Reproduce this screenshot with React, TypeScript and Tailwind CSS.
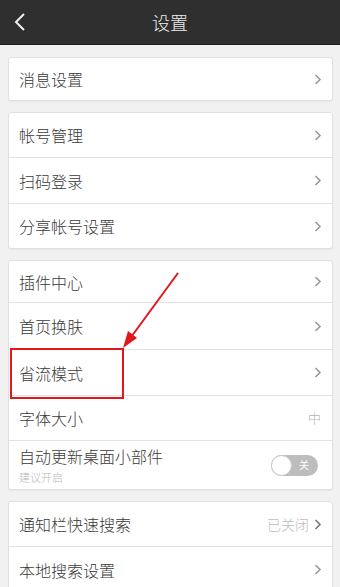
import type { ReactNode } from 'react';

const font = { fontFamily: '"Noto Sans CJK SC", "Noto Sans", sans-serif' };

function Chevron({ dark = false }: { dark?: boolean }) {
  return (
    <svg width="8" height="11" viewBox="0 0 8 11" className="shrink-0">
      <polyline
        points="1.5,1 6,5.5 1.5,10"
        fill="none"
        stroke={dark ? '#777777' : '#9a9a9a'}
        strokeWidth="1.6"
      />
    </svg>
  );
}

function Row({
  label,
  h,
  right,
  sub,
  last = false,
}: {
  label: string;
  h: string;
  right?: ReactNode;
  sub?: string;
  last?: boolean;
}) {
  return (
    <div className={`flex items-center justify-between pl-[10px] pr-[10px] ${h} ${last ? '' : 'border-b border-[#e3e3e3]'}`}>
      <div className="flex flex-col">
        <span className="text-[16px] leading-[20px] font-light text-[#3a3a3a]">{label}</span>
        {sub && <span className="text-[11px] leading-[14px] font-light text-[#b8b8b8] mt-[4px]">{sub}</span>}
      </div>
      {right ?? <Chevron />}
    </div>
  );
}

function Card({ children }: { children: ReactNode }) {
  return (
    <div className="bg-white border border-[#e0e0e0] rounded-[3px] shadow-[0_1px_1px_rgba(0,0,0,0.04)] flex flex-col">
      {children}
    </div>
  );
}

function Toggle() {
  return (
    <div className="relative w-[47px] h-[21px] rounded-full bg-[#bdbdbd] flex items-center mr-[4px]">
      <div className="w-[21px] h-[21px] rounded-full bg-white border border-[#c9c9c9]" />
      <span className="ml-[7px] text-[10px] leading-none text-white">关</span>
    </div>
  );
}

export default function App() {
  return (
    <div className="relative w-[340px] h-[587px] overflow-hidden bg-[#f1f1f1]" style={font}>
      <div className="h-[45px] bg-[#2f2f2f] border-b border-[#1c1c1c] flex items-center relative">
        <svg width="14" height="20" viewBox="0 0 14 20" className="absolute left-[13px] top-[12px]">
          <polyline points="11,2 3,10 11,18" fill="none" stroke="#f0f0f0" strokeWidth="2" />
        </svg>
        <div className="flex-1 text-center text-[18px] font-light text-[#eeeeee]">设置</div>
      </div>

      <div className="flex flex-col gap-[11px] pt-[12px] pl-[8px] pr-[7px]">
        <Card>
          <Row label="消息设置" h="h-[42px]" last />
        </Card>

        <Card>
          <Row label="帐号管理" h="h-[45px]" />
          <Row label="扫码登录" h="h-[46px]" />
          <Row label="分享帐号设置" h="h-[44px]" last />
        </Card>

        <Card>
          <Row label="插件中心" h="h-[42px]" />
          <Row label="首页换肤" h="h-[47px]" />
          <Row label="省流模式" h="h-[46px]" />
          <Row
            label="字体大小"
            h="h-[45px]"
            right={<span className="text-[13px] font-light text-[#b5b5b5] mr-[1px]">中</span>}
          />
          <Row label="自动更新桌面小部件" sub="建议开启" h="h-[48px]" right={<Toggle />} last />
        </Card>

        <Card>
          <Row
            label="通知栏快速搜索"
            h="h-[45px]"
            right={
              <div className="flex items-center gap-[5px]">
                <span className="text-[14px] font-light text-[#bdbdbd]">已关闭</span>
                <Chevron dark />
              </div>
            }
          />
          <Row label="本地搜索设置" h="h-[45px]" last />
        </Card>
      </div>

      {/* annotation overlay */}
      <div className="absolute left-[10px] top-[348px] w-[114px] h-[51px] border-[2px] border-[#e0171c]" />
      <svg width="340" height="587" className="absolute left-0 top-0 pointer-events-none">
        <line x1="178" y1="273" x2="126" y2="344" stroke="#e0171c" strokeWidth="2" />
        <polygon points="123,348 128,331 137,338" fill="#e0171c" />
      </svg>
    </div>
  );
}
